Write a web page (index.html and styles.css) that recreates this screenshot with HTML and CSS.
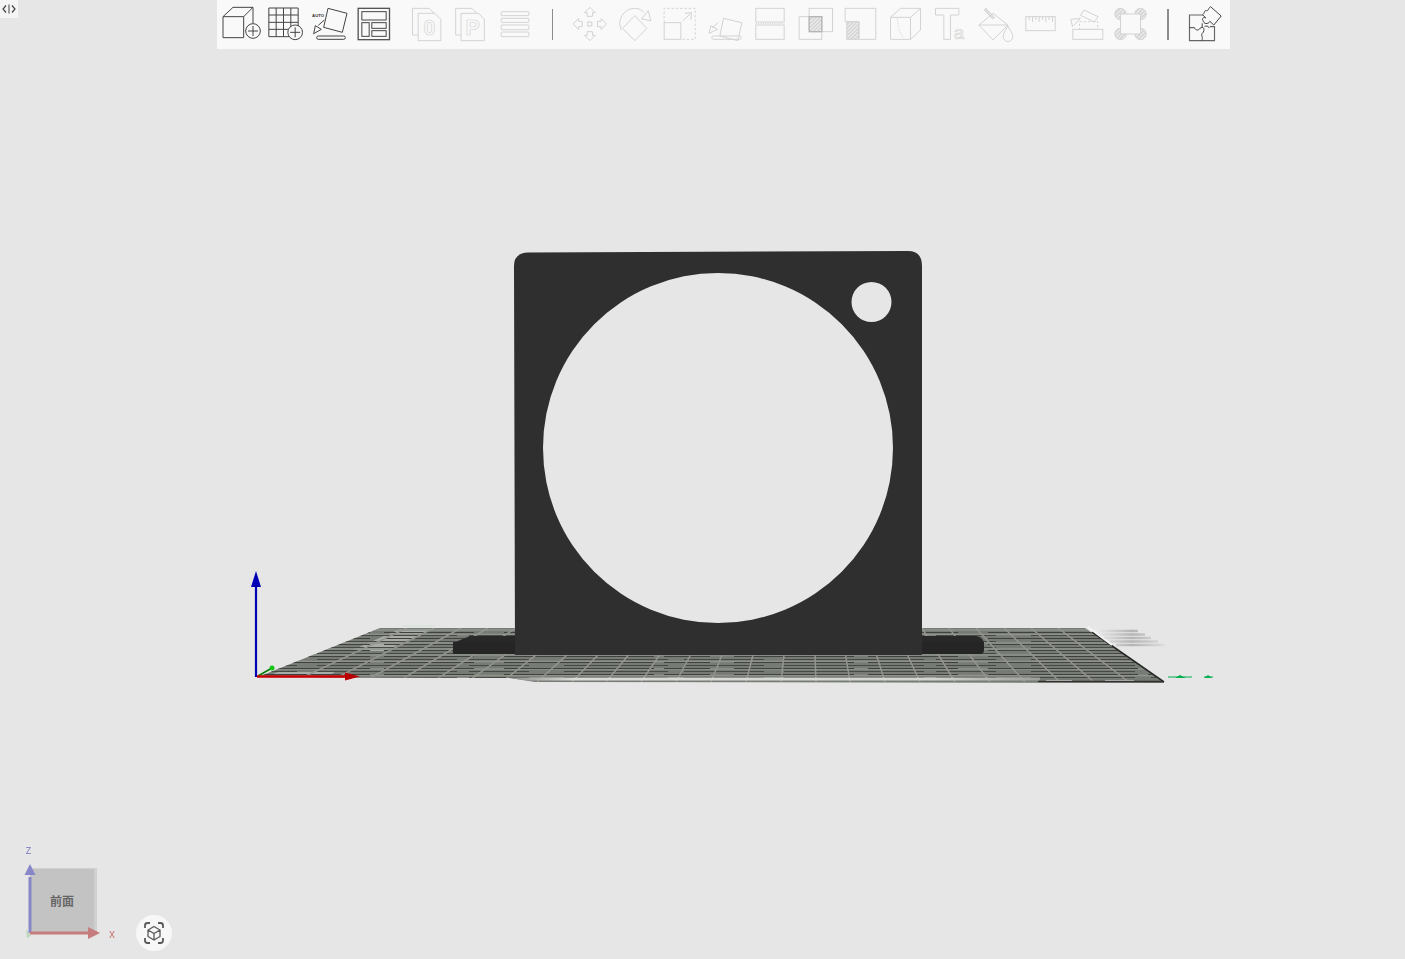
FILE: index.html
```html
<!DOCTYPE html>
<html lang="zh">
<head>
<meta charset="utf-8">
<title>3D 预览</title>
<link rel="stylesheet" href="styles.css">
</head>
<body>
<svg class="scene" viewBox="0 0 1405 959" aria-label="3D model on build plate">
  <defs>
    <pattern id="hatch" width="8" height="8" patternUnits="userSpaceOnUse" patternTransform="rotate(-45)">
      <rect width="8" height="8" fill="#efefef"/>
      <line x1="0" y1="2" x2="8" y2="2" stroke="#c6c6c6" stroke-width="3"/>
    </pattern>
    <linearGradient id="glow" x1="0" x2="1" y1="0" y2="0">
      <stop offset="0" stop-color="#8b8e8a"/>
      <stop offset=".12" stop-color="#d9dcd9"/>
      <stop offset=".8" stop-color="#d2d5d2"/>
      <stop offset="1" stop-color="#9a9d99"/>
    </linearGradient>
    <linearGradient id="streak" x1="0" x2="1" y1="0" y2="0">
      <stop offset="0" stop-color="#f0f0f0"/>
      <stop offset=".55" stop-color="#b4b4b4"/>
      <stop offset="1" stop-color="#dedede"/>
    </linearGradient>
    <clipPath id="plateClip"><path d="M380 628H1085L1164 683L535 682L510 678L258 677Z"/></clipPath>
  </defs>

  <path class="streak" d="M1092 631H1138M1098 634.500H1145M1104 638H1151M1110 641.500H1158M1116 645H1165"/>
  <path class="faint" d="M402 626H435"/>

  <path class="plate" d="M380 628H1085L1164 683L535 682L510 678L258 677Z"/>
  <g clip-path="url(#plateClip)">
    <path class="band" d="M400 629H432L385 651H350Z"/>
    <path class="band" d="M278 672H335L328 676H268Z"/>
    <path class="rows-light" d="M250 630H1170M250 634.500H1170M250 643H1170M250 649H1170M250 655H1170M250 661.500H1170M250 669H1170M250 675.500H1170"/>
    <path class="rows-a" d="M250 632.500H1170M250 638.500H1170M250 644.500H1170M250 650.500H1170M250 656.500H1170M250 662.500H1170M250 668.500H1170M250 674.500H1170"/>
    <path class="rows-b" d="M250 635.500H1170M250 641.500H1170M250 647.500H1170M250 653.500H1170M250 659.500H1170M250 665.500H1170M250 671.500H1170M250 677.500H1170"/>
    <path class="grid" d="M293 682L407 628M328 682L434 628M363 682L461 628M397 682L488 628M432 682L516 628M467 682L543 628M502 682L570 628M537 682L597 628M572 682L624 628M606 682L651 628M641 682L678 628M676 682L705 628M711 682L733 628M746 682L760 628M781 682L787 628M816 682L814 628M850 682L841 628M885 682L868 628M920 682L895 628M955 682L922 628M990 682L949 628M1025 682L976 628M1060 682L1004 628M1094 682L1031 628M1129 682L1058 628"/>
    <rect class="glow" x="510" y="677.500" width="530" height="3"/>
    <path class="edge-bottom" d="M1038 681.500H1164"/>
    <path class="edge-light" d="M1046 680.500H1072M1105 680.500H1134"/>
  </g>
  <path class="edge-dark" d="M1092 632L1164 682"/>
  <path class="edge-white" d="M1088 627L1112 645"/>

  <path class="base-top" d="M453 643L470 636H976Q983 637 984 643Z"/>
  <path class="base-front" d="M453 642H984V650Q984 654 980 654H453Z"/>
  <path class="part" fill-rule="evenodd" d="M514 266Q514 253 528 252.500L908 251Q922 251 922 266V655H515ZM543 448A175 175 0 1 0 893 448A175 175 0 1 0 543 448ZM851.500 302A20 20 0 1 0 891.500 302A20 20 0 1 0 851.500 302Z"/>

  <line class="ax-b" x1="256" y1="677" x2="256" y2="584"/>
  <path class="fill-b" d="M256 571L261 587H251Z"/>
  <line class="ax-g" x1="258" y1="676" x2="272" y2="668"/>
  <circle class="fill-g" cx="272" cy="668" r="2.500"/>
  <line class="ax-r" x1="257" y1="676.500" x2="347" y2="676.500"/>
  <path class="fill-r" d="M360 676.500L345 672.500V680.500Z"/>
  <path class="ax-g2" d="M1168 677H1180M1183 677H1192M1204 677H1213"/>
  <path class="fill-g2" d="M1180 675L1186 678H1175ZM1208 675L1212 678H1204Z"/>
</svg>

<button class="toggle" type="button" aria-label="toggle">
  <svg viewBox="0 0 18 18"><path d="M6 5.500L3 9L6 12.500M12 5.500L15 9L12 12.500"/><path class="toggle-bar" d="M9 4.500V13.500"/></svg>
</button>

<nav class="toolbar">
  <div class="group group-first">
    <svg class="ico on" viewBox="6 0 133.500 144"><path d="M18 50H80V113H18ZM18 50L48 22H108L80 50M108 22V70"/><circle class="knock" cx="108" cy="93" r="22"/><path d="M93 93H123M108 78V108"/></svg>
    <svg class="ico on" viewBox="139.500 0 133.500 144"><path d="M154 24H242V110H154ZM176 24V110M198 24V110M220 24V110M154 45H242M154 67H242M154 88H242"/><circle class="knock" cx="233" cy="97" r="22"/><path d="M218 97H248M233 82V112"/></svg>
    <svg class="ico on" viewBox="273 0 133.500 144"><text class="auto" x="285" y="52">AUTO</text><path d="M333 25L390 40L376 97L320 82ZM322 60L304 76M290 101L295 77L313 88Z"/><rect x="299" y="108" width="86" height="10" rx="5"/></svg>
    <svg class="ico on" viewBox="406.500 0 133.500 144"><rect class="thick" x="422" y="25" width="94" height="94"/><rect x="433" y="35" width="73" height="25"/><rect x="433" y="68" width="22" height="41"/><rect x="463" y="68" width="43" height="17"/><rect x="463" y="92" width="43" height="17"/></svg>
  </div>
  <div class="group">
    <svg class="ico off" viewBox="559.500 0 133.500 144"><path d="M602 105H585V25H635L650 40"/><path class="knock" d="M602 40H652L670 58V122H602Z"/><text class="glyph" x="636" y="106">0</text></svg>
    <svg class="ico off" viewBox="693 0 133.500 144"><path d="M732 105H716V25H765L780 40"/><path class="knock" d="M732 40H785L802 58V122H732Z"/><text class="glyph" x="767" y="105">P</text></svg>
    <svg class="ico off" viewBox="826.500 0 133.500 144"><rect x="851" y="35" width="83" height="12" rx="2"/><rect x="851" y="55" width="83" height="12" rx="2"/><rect x="851" y="75" width="83" height="14" rx="2"/><rect x="851" y="96" width="83" height="14" rx="2"/></svg>
  </div>
  <span class="sep"></span>
  <div class="group group-wide">
    <svg class="ico off" viewBox="31.500 0 135 144"><rect x="91" y="66" width="12" height="12"/><path d="M97 22L113 38H105V49H89V38H81ZM97 122L113 106H105V95H89V106H81ZM47 72L63 56V64H74V80H63V88ZM147 72L131 56V64H120V80H131V88Z"/></svg>
    <svg class="ico off" viewBox="166.500 0 135 144"><path d="M232 47L268 85L232 122L195 85ZM192 90C176 60 200 25 232 25C245 25 253 30 260 38M252 57L280 62L272 32Z"/></svg>
    <svg class="ico off" viewBox="301.500 0 135 144"><path class="dash" d="M320 68V25H413V118H370"/><rect x="320" y="68" width="50" height="50"/><path d="M376 62L398 42M382 40L402 38L400 60"/></svg>
    <svg class="ico off" viewBox="436.500 0 135 144"><path d="M498 55L553 68L541 122L487 108ZM482 68L464 84M455 100L460 77L480 88Z"/><rect x="463" y="108" width="88" height="10" rx="5"/></svg>
    <svg class="ico off" viewBox="571.500 0 135 144"><rect x="595" y="25" width="85" height="41"/><rect x="595" y="75" width="85" height="43"/><path class="dot" d="M595 70.500H680"/></svg>
    <svg class="ico off" viewBox="706.500 0 135 144"><rect x="725" y="50" width="68" height="68"/><rect x="755" y="25" width="70" height="70"/><rect class="hatch strong" x="755" y="50" width="38" height="45"/></svg>
    <svg class="ico off" viewBox="841.500 0 135 144"><path d="M863 25H955V118H905V65H863Z"/><rect class="hatch" x="868" y="65" width="35" height="53"/></svg>
    <svg class="ico off" viewBox="-22.500 0 135 144"><path d="M0 52H60V118H0ZM0 52L30 25H90L60 52M90 25V90L60 118"/><path class="dot" d="M20 55L26 90L38 115"/></svg>
    <svg class="ico off" viewBox="112.500 0 135 144"><path d="M135 25H205V45H180V118H160V45H135Z"/><text class="glyph-a" x="190" y="118">a</text></svg>
    <svg class="ico off" viewBox="247.500 0 135 144"><path d="M308 40L352 75L308 120L265 75ZM265 75H352"/><path class="bar" d="M283 27L310 55"/><path class="knock" d="M352 78C345 92 338 100 338 110A14 14 0 0 0 367 110C367 100 359 92 352 78Z"/></svg>
    <svg class="ico off" viewBox="382.500 0 135 144"><rect x="406" y="50" width="88" height="42"/><path d="M416 50V60M426 50V66M436 50V60M446 50V66M456 50V60M466 50V66M476 50V60M486 50V66"/></svg>
    <svg class="ico off" viewBox="517.500 0 135 144"><rect x="547" y="88" width="90" height="30"/><rect class="dash" x="567" y="65" width="55" height="23"/><path d="M580 30L623 50L612 66L570 46ZM541 58L570 55L546 80Z"/></svg>
    <svg class="ico off" viewBox="652.500 0 135 144"><circle class="hatch" cx="690" cy="42" r="17"/><circle class="hatch" cx="750" cy="42" r="17"/><circle class="hatch" cx="690" cy="102" r="17"/><circle class="hatch" cx="750" cy="102" r="17"/><rect class="knock" x="690" y="42" width="60" height="60"/></svg>
  </div>
  <span class="sep"></span>
  <div class="group group-last">
    <svg class="ico on" viewBox="1.500 0 135 144"><path class="thick-soft" d="M68 45H27V122H102V80H88"/><path d="M27 83H42C44 92 56 92 58 85L65 82C72 80 72 98 65 100C60 108 70 112 63 122M65 82L65 70M72 80C76 76 84 78 86 84"/><path class="knock" d="M90 20L122 48L100 75L88 64C84 74 68 72 68 62C62 56 70 50 76 54L66 44C74 40 70 30 78 32C84 34 82 26 90 20Z"/></svg>
  </div>
</nav>

<div class="gizmo">
  <div class="gizmo-face">前面</div>
  <svg class="gizmo-axes" viewBox="0 0 110 110">
    <path class="gz-g" d="M6 92L11 99L7 101Z"/>
    <line class="gz-z" x1="10" y1="96" x2="10" y2="40"/>
    <path class="gz-zh" d="M10 27L15.500 38H4.500Z"/>
    <line class="gz-x" x1="10" y1="96" x2="70" y2="96"/>
    <path class="gz-xh" d="M80 96L68 90V102Z"/>
    <text class="gz-lz" x="5.500" y="17">z</text>
    <text class="gz-lx" x="89" y="101">x</text>
  </svg>
</div>

<button class="camera" type="button" aria-label="view">
  <svg viewBox="0 0 36 36"><path class="cam" d="M9 13V10.500Q9 8 11.500 8H14M22 8H24.500Q27 8 27 10.500V13M27 23V25.500Q27 28 24.500 28H22M14 28H11.500Q9 28 9 25.500V23"/><path class="cam-thin" d="M18 11.500L24 15V21.500L18 25L12 21.500V15ZM12 15L18 18.500L24 15M18 18.500V25"/></svg>
</button>
</body>
</html>
```

FILE: styles.css
```css
html, body { margin: 0; height: 100%; }
body {
  background: #e6e6e6;
  font-family: "Noto Sans CJK SC", "Liberation Sans", sans-serif;
  overflow: hidden;
}

/* 3D canvas */
.scene { position: absolute; left: 0; top: 0; width: 1405px; height: 959px; }
.plate { fill: #777b75; }
.band { fill: #a9aca8; }
.rows-light { fill: none; stroke: #8f938d; stroke-width: 1.300; }
.rows-a { fill: none; stroke: #3f413d; stroke-width: 1; stroke-dasharray: 120 14 90 30 150 10 46 24; }
.rows-b { fill: none; stroke: #474944; stroke-width: 1; stroke-dasharray: 80 20 140 12 60 35 104 16; stroke-dashoffset: 33; }
.grid { fill: none; stroke: #93968f; stroke-width: 1.500; }
.glow { fill: url(#glow); }
.edge-bottom { stroke: #30322f; stroke-width: 1.500; }
.edge-light { stroke: #a5a8a4; stroke-width: 1; }
.edge-dark { stroke: #242624; stroke-width: 1.600; }
.edge-white { stroke: #f4f4f4; stroke-width: 2; }
.streak { fill: none; stroke: url(#streak); stroke-width: 2.400; }
.faint { stroke: #cfe0d4; stroke-width: 1; }
.part { fill: #2f2f2f; }
.base-top { fill: #282828; }
.base-front { fill: #252525; }
.ax-b { stroke: #0000b4; stroke-width: 2.200; }
.fill-b { fill: #0000b4; }
.ax-r { stroke: #c80000; stroke-width: 2.400; }
.fill-r { fill: #b80000; }
.ax-g { stroke: #007a00; stroke-width: 1.600; }
.fill-g { fill: #13c413; }
.ax-g2 { stroke: #00b050; stroke-width: 1; }
.fill-g2 { fill: #00b050; }

/* Toolbar */
.toolbar {
  position: relative;
  display: flex;
  align-items: flex-start;
  box-sizing: border-box;
  width: 1013px;
  height: 49px;
  margin-left: 217px;
  padding-left: 2px;
  background: #f9f9f9;
}
.group { display: flex; }
.group-first { margin-right: 6.500px; }
.ico {
  display: block;
  flex: none;
  width: 44.500px;
  height: 48px;
  fill: none;
  stroke: currentColor;
  stroke-width: 3;
  opacity: .999;
}
.group-wide .ico, .group-last .ico { width: 45px; }
.on { color: #444; }
.off { color: #d3d3d3; }
.knock { fill: #f9f9f9; }
.thick { stroke-width: 4; stroke: #555; }
.thick-soft { stroke-width: 3.500; stroke: #666; }
.dash { stroke-dasharray: 7 6; }
.dot { stroke-dasharray: 3 4; }
.hatch { fill: url(#hatch); }
.strong { stroke: #b5b5b5; stroke-width: 4; }
.bar { stroke-width: 10; stroke-dasharray: 4 2; stroke: #cecece; }
.auto { font: bold 13px "Liberation Sans", sans-serif; fill: #333; stroke: none; }
.glyph { font: bold 64px "Liberation Sans", sans-serif; text-anchor: middle; fill: #f9f9f9; stroke: currentColor; stroke-width: 2; }
.glyph-a { font: 56px "Liberation Sans", sans-serif; fill: #f9f9f9; stroke: currentColor; stroke-width: 2; }
.sep {
  flex: none;
  align-self: center;
  width: 1.500px;
  height: 31px;
  margin: 0 14.500px 0 14.500px;
  background: #8c8c8c;
}
.group-last { margin-left: -2.500px; }

/* Toggle at the top left */
.toggle {
  position: absolute;
  left: 0;
  top: 0;
  width: 18px;
  height: 18px;
  padding: 0;
  border: 0;
  background: #f5f5f5;
}
.toggle svg { display: block; width: 18px; height: 18px; fill: none; stroke: #444; stroke-width: 1.200; }
.toggle .toggle-bar { stroke: #888; stroke-width: 1.600; }

/* View gizmo */
.gizmo { position: absolute; left: 20px; top: 837px; width: 110px; height: 110px; opacity: .999; }
.gizmo-face {
  position: absolute;
  left: 10px;
  top: 31px;
  box-sizing: border-box;
  width: 67px;
  height: 65px;
  border-right: 3px solid #d0d0d0;
  border-top: 1px solid #d0d0d0;
  background: #c3c3c3;
  color: #666;
  font: 700 12px/63px "Noto Sans CJK SC", sans-serif;
  text-align: center;
}
.gizmo-axes { position: absolute; left: 0; top: 0; width: 110px; height: 110px; }
.gz-g { fill: #bcd8bc; }
.gz-z { stroke: #8686c8; stroke-width: 3; }
.gz-zh { fill: #8686c8; }
.gz-x { stroke: #c67c7c; stroke-width: 3; }
.gz-xh { fill: #c67c7c; }
.gz-lz { font: 12px "Liberation Sans", sans-serif; fill: #8a8ac4; }
.gz-lx { font: 12px "Liberation Sans", sans-serif; fill: #c67c7c; }

/* Camera button */
.camera {
  position: absolute;
  left: 135.500px;
  top: 915px;
  width: 36px;
  height: 36px;
  padding: 0;
  border: 0;
  border-radius: 50%;
  background: #f7f7f7;
}
.camera svg { display: block; width: 36px; height: 36px; fill: none; stroke: #595959; }
.cam { stroke-width: 1.800; }
.cam-thin { stroke-width: 1.300; }
```
